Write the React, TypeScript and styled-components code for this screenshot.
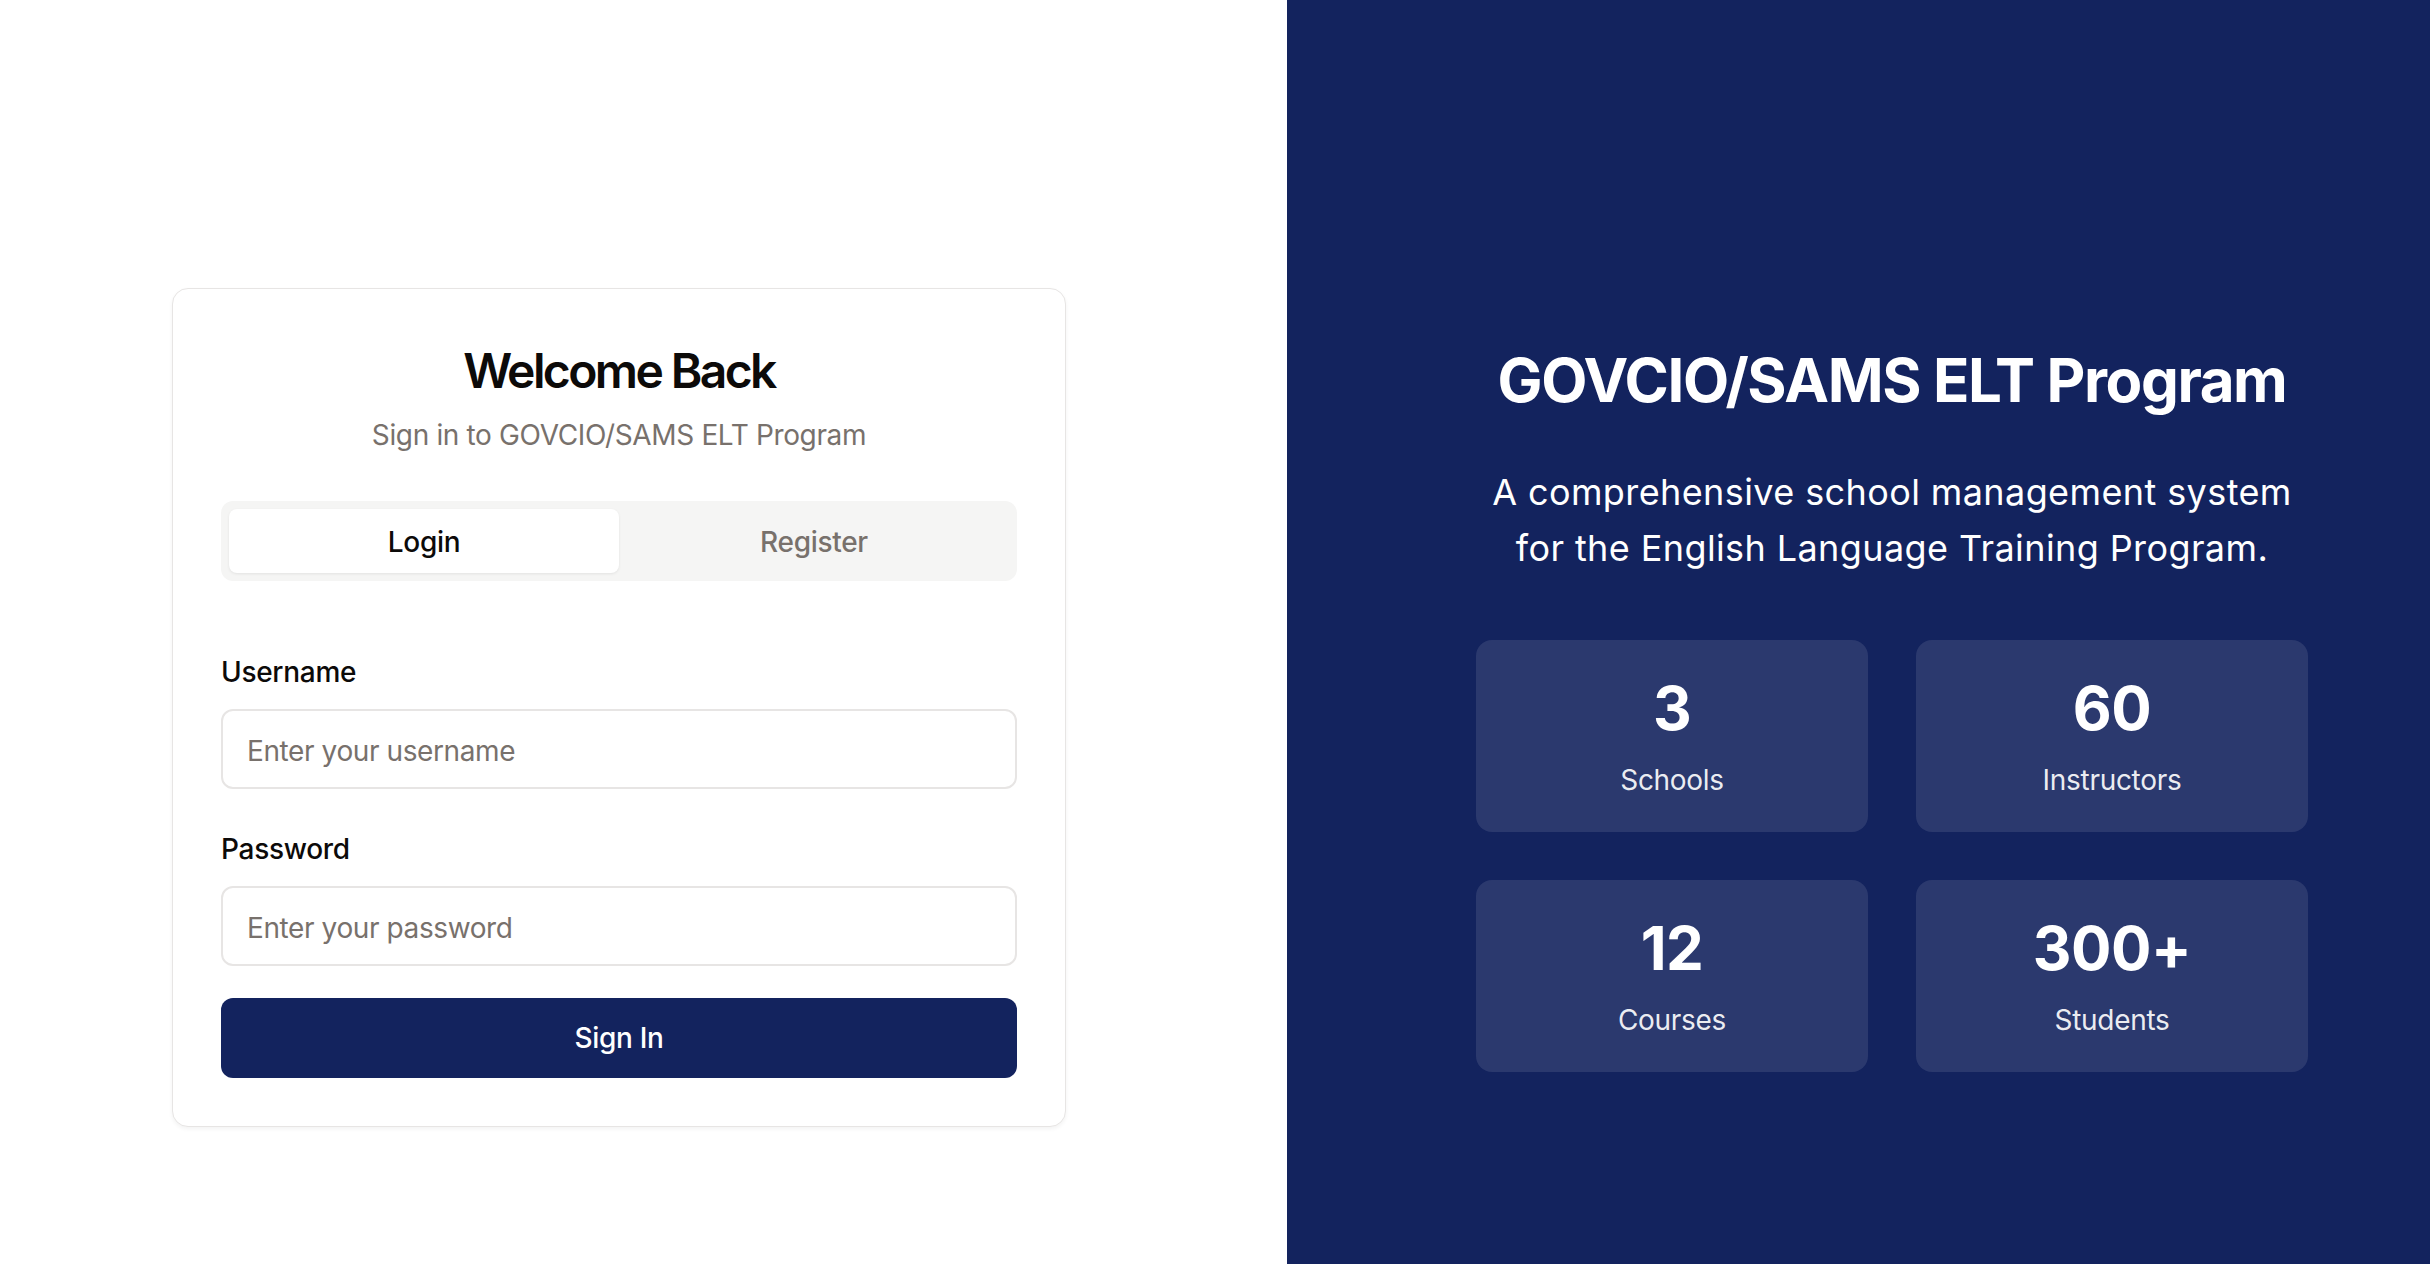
import React from "react";
import styled, { createGlobalStyle } from "styled-components";

const GlobalStyle = createGlobalStyle`
  * { box-sizing: border-box; }
  html, body { margin: 0; padding: 0; overflow: hidden; background: #ffffff; }
  body { font-family: Inter, "Noto Sans", "Liberation Sans", sans-serif; color: #0c0a09; }
`;

const Page = styled.div`
  display: flex;
  width: 2497px;
  height: 1415px;
`;

const LeftPanel = styled.main`
  flex: 0 0 1287px;
  display: flex;
  align-items: center;
  justify-content: center;
  padding-right: 49px;
  background: #ffffff;
`;

const Card = styled.section`
  width: 894px;
  border: 1px solid #e7e5e4;
  border-radius: 16px;
  background: #ffffff;
  box-shadow: 0 2px 4px rgba(0, 0, 0, 0.05);
`;

const CardHeader = styled.header`
  display: flex;
  flex-direction: column;
  align-items: center;
  gap: 12px;
  padding: 50px 48px 46px;
  text-align: center;
`;

const Title = styled.h1`
  margin: 0;
  font-size: 48px;
  line-height: 64px;
  font-weight: 600;
  letter-spacing: -2.6px;
  color: #0c0a09;
`;

const Subtitle = styled.p`
  margin: 0;
  font-size: 28px;
  line-height: 40px;
  letter-spacing: -0.35px;
  color: #78716c;
`;

const CardBody = styled.div`
  padding: 0 48px 48px;
  display: flex;
  flex-direction: column;
`;

const TabList = styled.div`
  display: grid;
  grid-template-columns: 1fr 1fr;
  height: 80px;
  padding: 8px;
  border-radius: 12px;
  background: #f5f5f4;
`;

const Tab = styled.button<{ $active?: boolean }>`
  border: 0;
  border-radius: 8px;
  padding-top: 2px;
  font-family: inherit;
  font-size: 28px;
  font-weight: 500;
  letter-spacing: -0.3px;
  cursor: pointer;
  color: ${(p) => (p.$active ? "#0c0a09" : "#78716c")};
  background: ${(p) => (p.$active ? "#ffffff" : "transparent")};
  box-shadow: ${(p) => (p.$active ? "0 1px 3px rgba(0,0,0,0.08)" : "none")};
`;

const Form = styled.form`
  display: flex;
  flex-direction: column;
  margin-top: 77px;
`;

const Field = styled.div<{ $gapTop?: number }>`
  display: flex;
  flex-direction: column;
  gap: 23px;
  margin-top: ${(p) => p.$gapTop ?? 0}px;
`;

const Label = styled.label`
  font-size: 28px;
  line-height: 28px;
  font-weight: 500;
  letter-spacing: -0.3px;
  color: #0c0a09;
`;

const Input = styled.input`
  height: 80px;
  width: 100%;
  padding: 3px 24px 0;
  border: 2px solid #e7e5e4;
  border-radius: 12px;
  font-family: inherit;
  font-size: 28px;
  letter-spacing: -0.4px;
  color: #0c0a09;
  background: #ffffff;
  outline: none;
  &::placeholder { color: #78716c; }
`;

const SubmitButton = styled.button`
  margin-top: 32px;
  height: 80px;
  border: 0;
  border-radius: 12px;
  background: #13235e;
  color: #ffffff;
  font-family: inherit;
  font-size: 28px;
  font-weight: 500;
  letter-spacing: -0.3px;
  cursor: pointer;
`;

const RightPanel = styled.aside`
  flex: 0 0 1210px;
  display: flex;
  align-items: center;
  justify-content: center;
  background: #13235e;
  color: #ffffff;
`;

const Hero = styled.div`
  width: 832px;
  display: flex;
  flex-direction: column;
  align-items: center;
  text-align: center;
`;

const HeroTitle = styled.h2`
  margin: 0;
  font-size: 60px;
  line-height: 72px;
  font-weight: 700;
  letter-spacing: -1.4px;
`;

const HeroText = styled.p`
  margin: 48px 0 0;
  font-size: 36px;
  line-height: 56px;
  letter-spacing: 0.4px;
  color: #ffffff;
`;

const StatGrid = styled.div`
  margin-top: 64px;
  width: 100%;
  display: grid;
  grid-template-columns: 1fr 1fr;
  gap: 48px;
`;

const StatCard = styled.div`
  height: 192px;
  padding: 32px;
  border-radius: 16px;
  background: rgba(255, 255, 255, 0.1);
  display: flex;
  flex-direction: column;
  align-items: center;
`;

const StatValue = styled.div`
  font-size: 60px;
  line-height: 72px;
  font-weight: 700;
  letter-spacing: -0.5px;
`;

const StatLabel = styled.div`
  margin-top: 16px;
  font-size: 28px;
  line-height: 40px;
  letter-spacing: -0.3px;
  color: rgba(255, 255, 255, 0.92);
`;

const stats = [
  { value: "3", label: "Schools" },
  { value: "60", label: "Instructors" },
  { value: "12", label: "Courses" },
  { value: "300+", label: "Students" },
];

export default function App() {
  return (
    <>
      <GlobalStyle />
      <Page>
        <LeftPanel>
          <Card>
            <CardHeader>
              <Title>Welcome Back</Title>
              <Subtitle>Sign in to GOVCIO/SAMS ELT Program</Subtitle>
            </CardHeader>
            <CardBody>
              <TabList>
                <Tab type="button" $active>Login</Tab>
                <Tab type="button">Register</Tab>
              </TabList>
              <Form onSubmit={(e) => e.preventDefault()}>
                <Field>
                  <Label htmlFor="username">Username</Label>
                  <Input id="username" placeholder="Enter your username" />
                </Field>
                <Field $gapTop={46}>
                  <Label htmlFor="password">Password</Label>
                  <Input id="password" type="password" placeholder="Enter your password" />
                </Field>
                <SubmitButton type="submit">Sign In</SubmitButton>
              </Form>
            </CardBody>
          </Card>
        </LeftPanel>
        <RightPanel>
          <Hero>
            <HeroTitle>GOVCIO/SAMS ELT Program</HeroTitle>
            <HeroText>
              A comprehensive school management system
              <br />
              for the English Language Training Program.
            </HeroText>
            <StatGrid>
              {stats.map((s) => (
                <StatCard key={s.label}>
                  <StatValue>{s.value}</StatValue>
                  <StatLabel>{s.label}</StatLabel>
                </StatCard>
              ))}
            </StatGrid>
          </Hero>
        </RightPanel>
      </Page>
    </>
  );
}
